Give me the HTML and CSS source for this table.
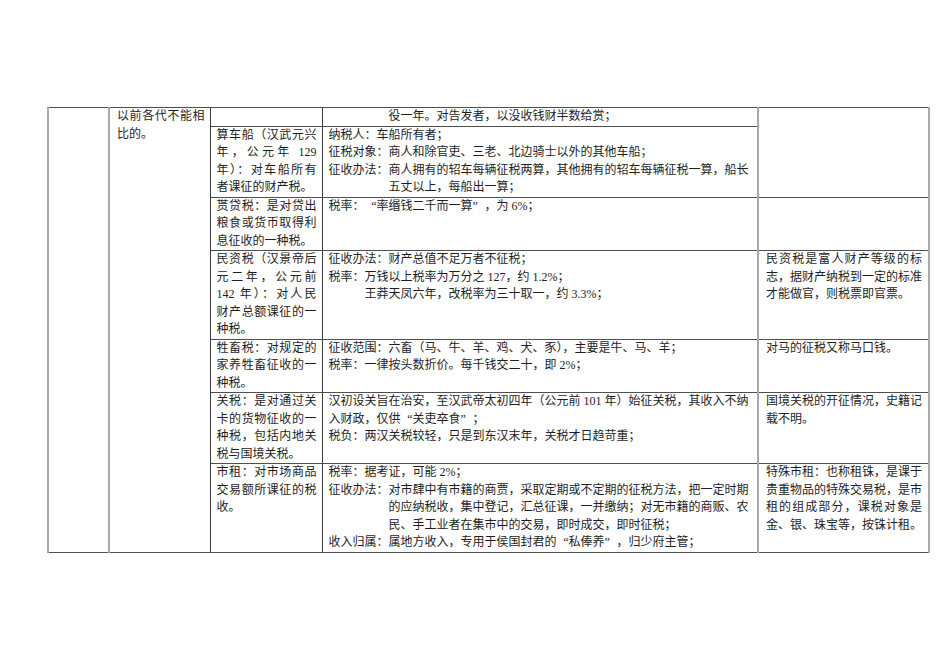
FILE: index.html
```html
<!DOCTYPE html>
<html lang="zh-CN">
<head>
<meta charset="utf-8">
<title>汉代税制</title>
<link rel="stylesheet" href="styles.css">
</head>
<body>
<div class="sheet">
<table class="tax">
  <colgroup>
    <col class="c1"><col class="c2"><col class="c3"><col class="c4"><col class="c5">
  </colgroup>
  <tbody>
    <tr>
      <td class="k1" rowspan="7"></td>
      <td class="k2" rowspan="7"><div class="ln j">以前各代不能相</div><div class="ln">比的。</div></td>
      <td class="k3"></td>
      <td class="k4"><div class="ln in5">役一年。对告发者，以没收钱财半数给赏；</div></td>
      <td class="k5" rowspan="2"></td>
    </tr>
    <tr>
      <td class="k3"><div class="ln j">算车船（汉武元兴</div><div class="ln j">年，公元年 129</div><div class="ln j">年）：对车船所有</div><div class="ln">者课征的财产税。</div></td>
      <td class="k4">
        <div class="ln">纳税人：车船所有者；</div>
        <div class="ln">征税对象：商人和除官吏、三老、北边骑士以外的其他车船；</div>
        <div class="ln j">征收办法：商人拥有的轺车每辆征税两算，其他拥有的轺车每辆征税一算，船长</div>
        <div class="ln in5">五丈以上，每船出一算；</div>
      </td>
    </tr>
    <tr>
      <td class="k3"><div class="ln j">贳贷税：是对贷出</div><div class="ln j">粮食或货币取得利</div><div class="ln">息征收的一种税。</div></td>
      <td class="k4"><div class="ln">税率：<span class="qo">“</span>率缗钱二千而一算<span class="qc">”</span>，为 6%；</div></td>
      <td class="k5"></td>
    </tr>
    <tr>
      <td class="k3"><div class="ln j">民资税（汉景帝后</div><div class="ln j">元二年，公元前</div><div class="ln j">142 年）：对人民</div><div class="ln j">财产总额课征的一</div><div class="ln">种税。</div></td>
      <td class="k4">
        <div class="ln">征收办法：财产总值不足万者不征税；</div>
        <div class="ln">税率：万钱以上税率为万分之 127，约 1.2%；</div>
        <div class="ln in3">王莽天凤六年，改税率为三十取一，约 3.3%；</div>
      </td>
      <td class="k5"><div class="ln j">民资税是富人财产等级的标</div><div class="ln j">志，据财产纳税到一定的标准</div><div class="ln">才能做官，则税票即官票。</div></td>
    </tr>
    <tr>
      <td class="k3"><div class="ln j">牲畜税：对规定的</div><div class="ln j">家养牲畜征收的一</div><div class="ln">种税。</div></td>
      <td class="k4">
        <div class="ln">征收范围：六畜（马、牛、羊、鸡、犬、豕），主要是牛、马、羊；</div>
        <div class="ln">税率：一律按头数折价。每千钱交二十，即 2%；</div>
      </td>
      <td class="k5"><div class="ln">对马的征税又称马口钱。</div></td>
    </tr>
    <tr>
      <td class="k3"><div class="ln j">关税：是对通过关</div><div class="ln j">卡的货物征收的一</div><div class="ln j">种税，包括内地关</div><div class="ln">税与国境关税。</div></td>
      <td class="k4">
        <div class="ln j">汉初设关旨在治安，至汉武帝太初四年（公元前 101 年）始征关税，其收入不纳</div>
        <div class="ln">入财政，仅供<span class="qo">“</span>关吏卒食<span class="qc">”</span>；</div>
        <div class="ln">税负：两汉关税较轻，只是到东汉末年，关税才日趋苛重；</div>
      </td>
      <td class="k5"><div class="ln j">国境关税的开征情况，史籍记</div><div class="ln">载不明。</div></td>
    </tr>
    <tr>
      <td class="k3"><div class="ln j">市租：对市场商品</div><div class="ln j">交易额所课征的税</div><div class="ln">收。</div></td>
      <td class="k4">
        <div class="ln">税率：据考证，可能 2%；</div>
        <div class="ln j">征收办法：对市肆中有市籍的商贾，采取定期或不定期的征税方法，把一定时期</div>
        <div class="ln j in5">的应纳税收，集中登记，汇总征课，一并缴纳；对无市籍的商贩、农</div>
        <div class="ln in5">民、手工业者在集市中的交易，即时成交，即时征税；</div>
        <div class="ln">收入归属：属地方收入，专用于侯国封君的<span class="qo">“</span>私俸养<span class="qc">”</span>，归少府主管；</div>
      </td>
      <td class="k5"><div class="ln j">特殊市租：也称租铢，是课于</div><div class="ln j">贵重物品的特殊交易税，是市</div><div class="ln j">租的组成部分，课税对象是</div><div class="ln">金、银、珠宝等，按铢计租。</div></td>
    </tr>
  </tbody>
</table>
</div>
</body>
</html>
```

FILE: styles.css
```css
html, body {
  margin: 0;
  padding: 0;
  background: #ffffff;
}

body {
  font-family: "Liberation Serif", "Noto Sans CJK SC", serif;
  font-size: 12px;
  color: #1e1e1e;
}

.sheet {
  padding: 107px 0 0 47px;
}

.tax {
  border-collapse: collapse;
  table-layout: fixed;
  width: 881px;
}

.c1 { width: 61px; }
.c2 { width: 101px; }
.c3 { width: 112px; }
.c4 { width: 436px; }
.c5 { width: 171px; }

.tax td {
  vertical-align: top;
  padding: 0 6px 0 6px;
  line-height: 17.5px;
  border: 1px solid #4f4f4f;
}

.tax td.k1 {
  border-left: 2px solid #a9a9a9;
  border-right: 2px solid #a9a9a9;
}

.tax td.k2 {
  border-left: 2px solid #a9a9a9;
  border-right: 1px solid #3c3c3c;
  padding-left: 7px;
  padding-right: 5px;
}

.tax td.k3 {
  border-left: 1px solid #3c3c3c;
  border-right: 1px solid #3c3c3c;
  padding-left: 6px;
  padding-right: 5px;
}

.tax td.k4 {
  border-left: 1px solid #3c3c3c;
  border-right: 2px solid #a9a9a9;
  padding-left: 6px;
  padding-right: 16px;
}

.tax td.k5 {
  border-left: 2px solid #a9a9a9;
  border-right: 2px solid #a9a9a9;
  padding-left: 7px;
  padding-right: 6px;
}

.ln {
  display: block;
  white-space: nowrap;
}

.ln.j {
  text-align: justify;
  text-align-last: justify;
}

.in5 {
  padding-left: 5em;
}

.in3 {
  padding-left: 3em;
}

.qo,
.qc {
  display: inline-block;
  width: 1em;
  font-family: "Liberation Serif", serif;
}

.qo {
  text-align: right;
}

.qc {
  text-align: left;
}
```
